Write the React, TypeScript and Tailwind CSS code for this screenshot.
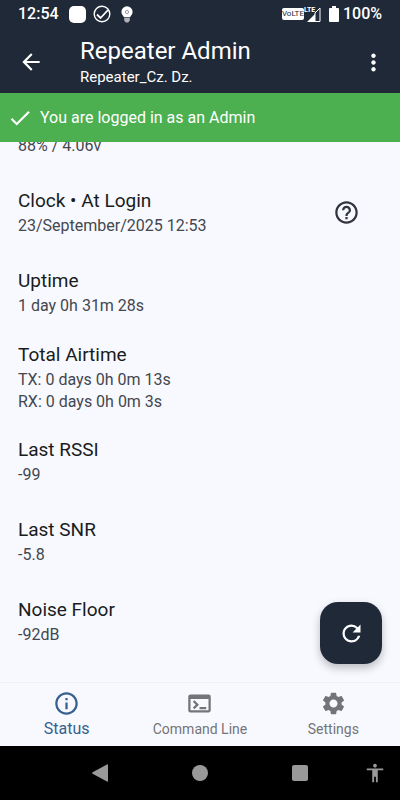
import React from "react";
import {
  MdAccessibility,
  MdArrowBack,
  MdCheck,
  MdHelpOutline,
  MdInfoOutline,
  MdMoreVert,
  MdOutlineTerminal,
  MdRefresh,
  MdSettings,
} from "react-icons/md";

const stats = [
  { lines: ["88% / 4.06v"] },
  { title: "Clock • At Login", lines: ["23/September/2025 12:53"], help: true },
  { title: "Uptime", lines: ["1 day 0h 31m 28s"] },
  {
    title: "Total Airtime",
    lines: ["TX: 0 days 0h 0m 13s", "RX: 0 days 0h 0m 3s"],
  },
  { title: "Last RSSI", lines: ["-99"] },
  { title: "Last SNR", lines: ["-5.8"] },
  { title: "Noise Floor", lines: ["-92dB"] },
];

const App = () => {
  return (
    <div className="h-screen flex flex-col bg-[#f8f9ff] font-['Roboto',sans-serif]">
      <StatusBar />
      <header className="flex items-center h-[66px] shrink-0 px-[18px] pt-1 bg-[#202938] text-white">
        <button aria-label="Back">
          <MdArrowBack className="size-[26px]" />
        </button>
        <div className="flex-1 pl-9">
          <h1 className="text-2xl leading-[30px]">Repeater Admin</h1>
          <p className="text-[15px] leading-[22px]">Repeater_Cz. Dz.</p>
        </div>
        <button aria-label="More options" className="-mr-[5px]">
          <MdMoreVert className="size-[27px]" />
        </button>
      </header>
      <div className="flex items-center gap-[7px] h-[49px] shrink-0 px-[7px] bg-[#4caf50] text-white">
        <MdCheck className="size-[26px]" />
        <p className="text-base">You are logged in as an Admin</p>
      </div>

      <main className="relative flex-1 min-h-0 flex flex-col justify-end overflow-hidden">
        <div className="pb-5">
          {stats.map((stat) => (
            <Stat key={stat.lines[0]} {...stat} />
          ))}
        </div>
        {/* floating refresh */}
        <button
          aria-label="Refresh"
          className="absolute right-[18px] bottom-[18px] size-[62px] flex items-center justify-center rounded-[18px] bg-[#202938] text-white shadow-[0_4px_8px_rgba(0,0,0,0.25)]"
        >
          <MdRefresh className="size-[27px]" />
        </button>
      </main>

      <nav className="grid grid-cols-3 h-16 shrink-0 border-t border-[#f0f1f6] text-[#737477]">
        <NavItem icon={<MdInfoOutline />} label="Status" active />
        <NavItem icon={<MdOutlineTerminal />} label="Command Line" />
        <NavItem icon={<MdSettings />} label="Settings" />
      </nav>
      <SystemBar />
    </div>
  );
};

type StatProps = {
  title?: string;
  lines: string[];
  help?: boolean;
};

function Stat({ title, lines, help }: StatProps) {
  return (
    <section
      className={`flex items-center px-[18px] ${lines.length > 1 ? "pt-2 pb-[9px]" : title ? "pt-[14px] pb-4" : "pb-4"}`}
    >
      <div className="flex-1">
        {title && (
          <h2 className="text-[19px] leading-7 text-[#191c20]">{title}</h2>
        )}
        {lines.map((line) => (
          <p key={line} className="text-base leading-[22px] text-[#43474e]">
            {line}
          </p>
        ))}
      </div>
      {help && (
        <button aria-label="Clock help" className="mr-[22px] text-[#32353b]">
          <MdHelpOutline className="size-[27px]" />
        </button>
      )}
    </section>
  );
}

type NavItemProps = {
  icon: React.ReactNode;
  label: string;
  active?: boolean;
};

function NavItem({ icon, label, active }: NavItemProps) {
  return (
    <button
      className={`flex flex-col items-center pt-[7px] ${active ? "text-[#36618e] text-base" : "text-sm"}`}
    >
      <span className="text-[27px]">{icon}</span>
      <span className="leading-6">{label}</span>
    </button>
  );
}

function StatusBar() {
  return (
    <div className="flex items-center h-[27px] shrink-0 px-[18px] bg-[#202938] text-white text-base font-medium">
      <span>12:54</span>
      <svg viewBox="0 0 66 20" className="w-[66px] h-5 ml-2.5" fill="none">
        <rect x="0" y="2" width="17" height="17" rx="5" fill="#fff" />
        <circle cx="33" cy="10" r="7.8" stroke="#fff" strokeWidth="1.4" />
        <path d="M28 10.5l3.5 3.5 7.5-8" stroke="#fff" strokeWidth="1.8" />
        <path
          d="M58 2.2a5.6 5.6 0 0 0-5.6 5.7c0 2.2 1.6 3.7 2.6 5.3h6c1-1.6 2.6-3.1 2.6-5.3A5.6 5.6 0 0 0 58 2.2z"
          fill="#fff"
        />
        <path d="M55.2 14h5.6v2.5l-1.6 2h-2.4l-1.6-2z" fill="#aeb2b8" />
        <circle cx="58" cy="8" r="1.6" stroke="#9a9ea5" />
      </svg>
      <div className="flex items-center ml-auto">
        <span className="flex items-center h-3 rounded-xs bg-white text-[#202938] text-[8px] font-normal">
          VoLTE
        </span>
        <svg viewBox="0 0 17 18" className="w-[17px] h-[18px]">
          <path d="M3 17l8-8v8z" fill="#fff" />
          <path d="M11 8l5-5v13.5h-5z" fill="#202938" stroke="#fff" />
          <text x="0" y="7" fontSize="7" fontWeight="700" fill="#fff">
            LTE
          </text>
        </svg>
        <svg viewBox="0 0 10 16" className="w-[10px] h-4 ml-2" fill="#fff">
          <path d="M3 0h4v2h2q1 0 1 1v12q0 1-1 1H1q-1 0-1-1V3q0-1 1-1h2z" />
        </svg>
        <span className="ml-1">100%</span>
      </div>
    </div>
  );
}

function SystemBar() {
  return (
    <div className="relative flex items-center justify-center gap-[84px] h-[54px] shrink-0 bg-black text-[#999]">
      <button aria-label="System back">
        <svg viewBox="0 0 16 18" className="w-4 h-[18px]" fill="currentColor">
          <path d="M15 .5q1-.5 1 .6v15.8q0 1.100-1 .6L.6 9.700q-1-.7 0-1.400z" />
        </svg>
      </button>
      <button aria-label="Home" className="size-4 rounded-full bg-[#999]" />
      <button aria-label="Recent apps" className="size-4 rounded-xs bg-[#999]" />
      <button aria-label="Accessibility" className="absolute right-[14px]">
        <MdAccessibility className="size-[22px]" />
      </button>
    </div>
  );
}

export default App;
